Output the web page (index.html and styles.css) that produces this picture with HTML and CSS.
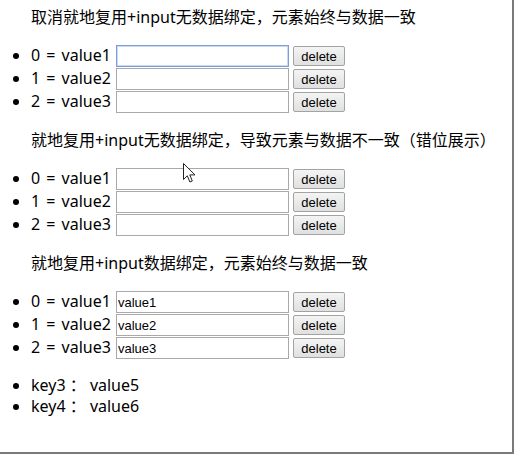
FILE: index.html
```html
<!DOCTYPE html>
<html>
<head>
<meta charset="utf-8">
<link rel="stylesheet" href="styles.css">
</head>
<body>
<div class="frame">
  <p class="title first">取消就地复用+input无数据绑定，元素始终与数据一致</p>
  <ul class="list">
    <li class="row"><span class="label">0 = value1</span><input class="field focus" type="text"><button class="btn">delete</button></li>
    <li class="row"><span class="label">1 = value2</span><input class="field" type="text"><button class="btn">delete</button></li>
    <li class="row"><span class="label">2 = value3</span><input class="field" type="text"><button class="btn">delete</button></li>
  </ul>
  <p class="title">就地复用+input无数据绑定，导致元素与数据不一致（错位展示）</p>
  <ul class="list">
    <li class="row"><span class="label">0 = value1</span><input class="field" type="text"><button class="btn">delete</button></li>
    <li class="row"><span class="label">1 = value2</span><input class="field" type="text"><button class="btn">delete</button></li>
    <li class="row"><span class="label">2 = value3</span><input class="field" type="text"><button class="btn">delete</button></li>
  </ul>
  <p class="title">就地复用+input数据绑定，元素始终与数据一致</p>
  <ul class="list">
    <li class="row"><span class="label">0 = value1</span><input class="field" type="text" value="value1"><button class="btn">delete</button></li>
    <li class="row"><span class="label">1 = value2</span><input class="field" type="text" value="value2"><button class="btn">delete</button></li>
    <li class="row"><span class="label">2 = value3</span><input class="field" type="text" value="value3"><button class="btn">delete</button></li>
  </ul>
  <ul class="list kv">
    <li>key3 ：&nbsp;value5</li>
    <li>key4 ：&nbsp;value6</li>
  </ul>
  <svg class="cursor" width="14" height="21" viewBox="0 0 14 21"><path d="M0.5 0.5 L0.5 16.5 L4.3 12.8 L6.9 19 L9.3 18 L6.8 11.9 L12 11.9 Z" fill="#fff" stroke="#222" stroke-width="1" stroke-linejoin="miter"/></svg>
</div>
</body>
</html>
```

FILE: styles.css
```css
html, body {
  margin: 0;
  padding: 0;
  background: #fff;
}
.frame {
  position: relative;
  width: 514px;
  height: 454px;
  box-sizing: border-box;
  border-right: 2px solid #7a7a7a;
  border-bottom: 2px solid #7a7a7a;
  padding-top: 6px;
  font-family: "Noto Sans", "Noto Sans CJK SC", sans-serif;
  font-size: 16px;
  color: #000;
}
.title {
  margin: 16px 0 16px 31px;
  line-height: 22px;
  font-family: "Noto Sans", "Noto Sans CJK SC", sans-serif;
}
.title.first {
  margin-top: 0;
}
.list {
  margin: 16px 0;
  padding: 0 0 0 31px;
  list-style: disc outside;
}
.row {
  height: 23px;
  line-height: 23px;
  white-space: nowrap;
}
.label {
  display: inline-block;
  width: 85px;
  vertical-align: top;
  word-spacing: 2px;
}
.field {
  box-sizing: border-box;
  width: 173px;
  height: 22px;
  margin: 1px 0 0 0;
  padding: 1px 1px;
  border: 1px solid #a9a9a9;
  border-radius: 0;
  vertical-align: top;
  font-family: "Liberation Sans", Arial, sans-serif;
  font-size: 13px;
  color: #000;
  outline: none;
  background: #fff;
}
.field.focus {
  border-color: #7b9ed8;
  box-shadow: inset 0 0 0 1px #c9d9f3;
}
.btn {
  box-sizing: border-box;
  width: 52px;
  height: 20px;
  margin: 2px 0 0 4px;
  padding: 0;
  border: 1px solid #a3a3a3;
  border-radius: 2px;
  background: linear-gradient(#f4f4f4, #e0e0e0);
  vertical-align: top;
  font-family: "Liberation Sans", Arial, sans-serif;
  font-size: 13px;
  line-height: 17px;
  color: #000;
}
.kv li {
  line-height: 21px;
}
.cursor {
  position: absolute;
  left: 183px;
  top: 163px;
}
```
